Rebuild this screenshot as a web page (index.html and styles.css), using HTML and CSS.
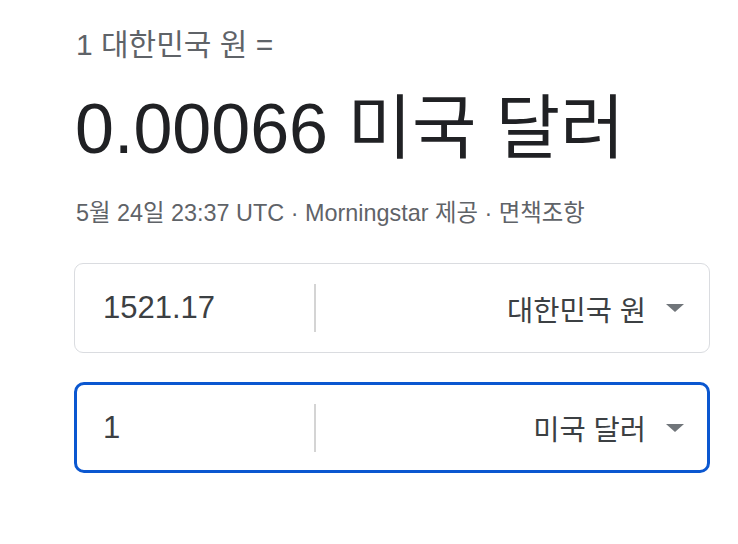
FILE: index.html
```html
<!DOCTYPE html>
<html lang="ko">
<head>
<meta charset="utf-8">
<link rel="stylesheet" href="styles.css">
</head>
<body>
<div class="wrap">
  <div class="title">1 대한민국 원 =</div>
  <div class="result">0.00066 미국 달러</div>
  <div class="meta">5월 24일 23:37 UTC · Morningstar 제공 · 면책조항</div>
  <div class="box">
    <div class="amount">1521.17</div>
    <div class="sep"></div>
    <div class="currency"><span>대한민국 원</span><span class="tri"></span></div>
  </div>
  <div class="box active">
    <div class="amount">1</div>
    <div class="sep"></div>
    <div class="currency"><span>미국 달러</span><span class="tri"></span></div>
  </div>
</div>
</body>
</html>
```

FILE: styles.css
```css
html, body {
  margin: 0;
  padding: 0;
  background: #fff;
}
body {
  font-family: "Liberation Sans", Arial, "Noto Sans CJK KR", sans-serif;
}
.wrap {
  padding: 27px 28px 0 74px;
  width: 636px;
}
.title {
  font-size: 30px;
  line-height: 36px;
  color: #5f6368;
  padding-left: 2px;
}
.result {
  margin-top: 26px;
  font-size: 70px;
  line-height: 80px;
  color: #202124;
  padding-left: 1px;
}
.meta {
  margin-top: 31px;
  font-size: 23.4px;
  line-height: 26px;
  color: #5f6368;
  padding-left: 2px;
}
.box {
  margin-top: 37px;
  height: 88px;
  border: 1px solid #dadce0;
  border-radius: 9px;
  display: flex;
  align-items: center;
  box-sizing: content-box;
}
.box.active {
  margin-top: 29px;
  height: 85px;
  border: 3px solid #0b57d0;
  border-radius: 10px;
}
.amount {
  width: 211px;
  padding-left: 28px;
  font-size: 31px;
  color: #3c4043;
}
.active .amount {
  padding-left: 26px;
}
.sep {
  width: 2px;
  height: 48px;
  background: #d4d4d4;
}
.currency {
  flex: 1;
  display: flex;
  justify-content: flex-end;
  align-items: center;
  padding-right: 25px;
  font-size: 28.5px;
  color: #3c4043;
}
.active .currency {
  padding-right: 23px;
}
.tri {
  width: 0;
  height: 0;
  margin-left: 20px;
  border-left: 9px solid transparent;
  border-right: 9px solid transparent;
  border-top: 8px solid #70757a;
}
```
